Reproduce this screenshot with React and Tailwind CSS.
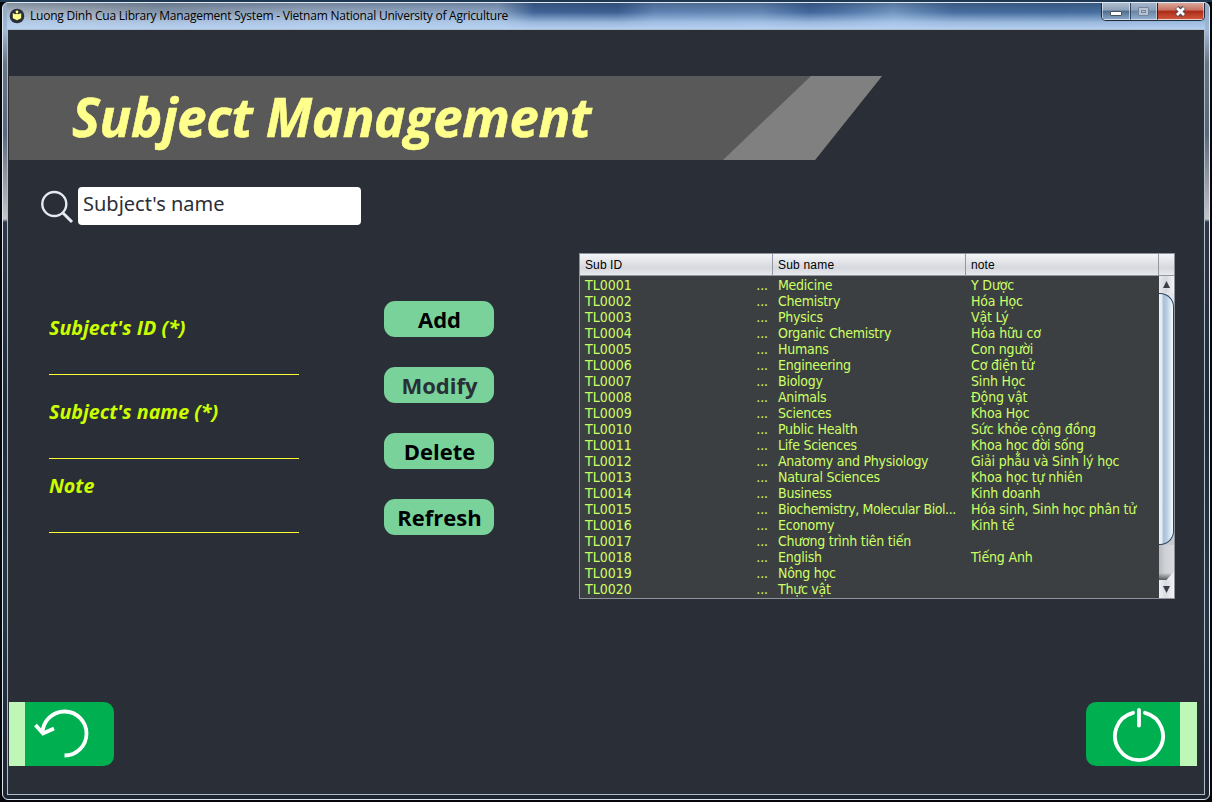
const subjects = [
  ["TL0001", "Medicine", "Y Dược"],
  ["TL0002", "Chemistry", "Hóa Học"],
  ["TL0003", "Physics", "Vật Lý"],
  ["TL0004", "Organic Chemistry", "Hóa hữu cơ"],
  ["TL0005", "Humans", "Con người"],
  ["TL0006", "Engineering", "Cơ điện tử"],
  ["TL0007", "Biology", "Sinh Học"],
  ["TL0008", "Animals", "Động vật"],
  ["TL0009", "Sciences", "Khoa Học"],
  ["TL0010", "Public Health", "Sức khỏe cộng đồng"],
  ["TL0011", "Life Sciences", "Khoa học đời sống"],
  ["TL0012", "Anatomy and Physiology", "Giải phẫu và Sinh lý học"],
  ["TL0013", "Natural Sciences", "Khoa học tự nhiên"],
  ["TL0014", "Business", "Kinh doanh"],
  ["TL0015", "Biochemistry, Molecular Biol...", "Hóa sinh, Sinh học phân tử"],
  ["TL0016", "Economy", "Kinh tế"],
  ["TL0017", "Chương trình tiên tiến", ""],
  ["TL0018", "English", "Tiếng Anh"],
  ["TL0019", "Nông học", ""],
  ["TL0020", "Thực vật", ""],
];

function TitleBar() {
  return (
    <header className="flex h-[26px] shrink-0 items-start justify-between bg-[linear-gradient(90deg,#a9b4c2_0%,#9aa5b3_7%,#8495ab_13%,#93a6be_25%,#8aa3c4_41%,#3f6396_44%,#3b5f92_51%,#5f83b3_54%,#6387b5_63%,#40669a_67%,#4f76a8_70%,#7095c0_74%,#466d9e_79%,#426a9b_88%,#5479a5_100%)]">
      <div className="flex h-[26px] w-full items-start justify-between bg-[linear-gradient(180deg,rgba(20,30,45,.25)_0%,rgba(190,215,245,0)_35%,rgba(185,212,244,.75)_75%,rgba(185,212,244,.95)_100%)]">
        <div className="flex h-[26px] items-center pl-[2px]">
          <svg className="h-4 w-4" viewBox="0 0 16 16">
            <circle cx="8" cy="8" r="7.3" fill="#2b2e37" />
            <path d="M3.8 5.2L7 6.2L8 5.7L9 6.2L12.2 5.2V10.2L8 12.2L3.8 10.2Z" fill="#ffff8c" />
            <circle cx="8" cy="4" r="1.4" fill="#ffff8c" />
          </svg>
          <span className="ml-[5px] whitespace-nowrap font-['Open_Sans',sans-serif] text-[12px] leading-[26px] tracking-[-0.22px] text-black">
            Luong Dinh Cua Library Management System - Vietnam National University of Agriculture
          </span>
        </div>
        <div className="flex h-[18px] w-[104px] overflow-hidden rounded-b-[5px] border border-t-0 border-[#1d2c3f]">
          <div className="flex w-[28px] items-center justify-center border border-t-0 border-white/50 bg-[linear-gradient(180deg,#aebdce_0%,#8da1b8_45%,#4e6a8a_50%,#86a5c5_100%)]">
            <span className="mt-[5px] h-[5px] w-[12px] rounded-[1px] border border-[#4b5360] bg-white" />
          </div>
          <div className="flex w-[27px] items-center justify-center border border-t-0 border-l-[#33465d] border-white/50 bg-[linear-gradient(180deg,#a3b5ca_0%,#8aa0ba_45%,#6883a2_50%,#8fadcd_100%)]">
            <span className="flex h-[9px] w-[11px] items-center justify-center rounded-[1px] border border-[#71849b] bg-[#b5c3d3]">
              <span className="h-[3px] w-[5px] border border-[#71849b]" />
            </span>
          </div>
          <div className="flex flex-1 items-center justify-center border border-t-0 border-l-[#4a1c18] border-white/50 bg-[linear-gradient(180deg,#dba89b_0%,#c9705e_45%,#a82a18_50%,#d0553a_100%)]">
            <svg className="h-[11px] w-[13px]" viewBox="0 0 13 11">
              <path d="M3 1.5L10 9.5M10 1.5L3 9.5" stroke="#4e4a54" strokeWidth="4.8" />
              <path d="M3 2L10 9M10 2L3 9" stroke="#fff" strokeWidth="2.8" />
            </svg>
          </div>
        </div>
      </div>
    </header>
  );
}

function Banner() {
  return (
    <div className="mt-[46px] flex h-[84px]">
      <div className="flex h-[84px] w-[873px] bg-[#595959] [clip-path:polygon(0_0,873px_0,806px_84px,0_84px)]">
        <h1 className="w-[714px] shrink-0 whitespace-nowrap pl-[63px] font-['Open_Sans',sans-serif] text-[54px] font-bold italic leading-[80px] tracking-[-0.4px] text-[#ffff8c] [-webkit-text-stroke:0.6px_#ffff8c]">
          <span className="inline-block origin-left scale-x-[0.976]">Subject Management</span>
        </h1>
        <div className="h-[84px] w-[159px] bg-[#808080] [clip-path:polygon(88px_0,159px_0,159px_84px,0_84px)]" />
      </div>
    </div>
  );
}

function Field({ label, className }) {
  return (
    <div className={"flex w-[250px] flex-col border-b border-[#ffff33] " + className}>
      <label className="whitespace-nowrap font-['Open_Sans',sans-serif] text-[19px] font-bold italic leading-[26px] text-[#ccff00]">
        <span className="inline-block origin-left scale-x-[1.035]">{label}</span>
      </label>
    </div>
  );
}

function ActionButton({ label, dim }) {
  return (
    <button
      className={
        "flex h-9 w-[110px] items-center justify-center rounded-[11px] bg-[#78d299] pl-px font-['Open_Sans',sans-serif] text-[22px] font-bold leading-[34px] " +
        (dim ? "text-[#2a2e37]" : "text-black")
      }
    >
      {label}
    </button>
  );
}

function ScrollBar() {
  return (
    <div className="flex w-[15px] flex-col bg-[linear-gradient(90deg,#b9bac0_0%,#cfd0d5_40%,#dadbe0_100%)]">
      <div className="flex h-[17px] items-center justify-center bg-[linear-gradient(90deg,#e8e9ed_0%,#d5d7dc_45%,#f3f4f6_100%)]">
        <svg className="h-[7px] w-[7px]" viewBox="0 0 7 7"><path d="M3.5 0L7 7H0Z" fill="#3a3e46" /></svg>
      </div>
      <div className="flex h-[252px] bg-[linear-gradient(180deg,#e4e6ea_0%,#e4e6ea_8%,#c9cad0_92%)]">
        <div className="h-[252px] w-[15px] rounded-r-[14px] border border-l-0 border-[#27445f] bg-[linear-gradient(90deg,#f0f5fa_0%,#dfe9f3_22%,#a9c0d6_30%,#b8cde0_55%,#dbeaf6_80%,#f2ffff_100%)]" />
      </div>
      <div className="h-[35px] bg-[linear-gradient(180deg,transparent_80%,#55565a_100%)]">
        <div className="h-full bg-[#eceef1] [clip-path:polygon(100%_76%,100%_100%,50%_100%)]" />
      </div>
      <div className="flex flex-1 items-center justify-center bg-[linear-gradient(90deg,#f0f1f4_0%,#d9dbe0_45%,#f3f4f6_100%)]">
        <svg className="h-[7px] w-[7px]" viewBox="0 0 7 7"><path d="M0 0H7L3.5 7Z" fill="#3a3e46" /></svg>
      </div>
    </div>
  );
}

function SubjectTable() {
  return (
    <section className="flex h-[346px] w-[596px] flex-col border border-[#8d929c] bg-[#3c3f41]">
      <div className="flex h-[22px] shrink-0 border-b border-[#9297a1] bg-[linear-gradient(180deg,#f4f5f8_0%,#dfe1e6_45%,#d6d8de_65%,#e8eaee_100%)] font-['Liberation_Sans',sans-serif] text-[12px] leading-[22px] tracking-[0.1px] text-black">
        <div className="w-[192px] pl-[5px]">Sub ID</div>
        <div className="w-[193px] border-l border-[#9297a1] pl-[5px] tracking-[0.2px]">Sub name</div>
        <div className="w-[193px] border-l border-[#9297a1] pl-[5px]">note</div>
        <div className="flex-1 border-l border-[#9297a1]" />
      </div>
      <div className="flex min-h-0 flex-1">
        <div className="flex w-[579px] flex-col pt-px font-['DejaVu_Sans_Condensed','DejaVu_Sans',sans-serif] text-[14px] leading-[16px] tracking-[-0.25px] text-[#ccff66] [font-stretch:condensed]">
          {subjects.map(([id, name, note]) => (
            <div key={id} className="flex h-4 shrink-0 overflow-hidden whitespace-nowrap">
              <div className="flex w-[193px] justify-between pl-[5px] pr-[5px]">
                <span className="tracking-normal">{id}</span>
                <span className="tracking-[-0.1px]">...</span>
              </div>
              <div className={"w-[193px] pl-[5px] " + (name.length > 25 ? "tracking-[-0.42px]" : "")}>{name}</div>
              <div className="w-[193px] pl-[5px] tracking-[-0.17px]">{note}</div>
            </div>
          ))}
        </div>
        <ScrollBar />
      </div>
    </section>
  );
}

export default function App() {
  return (
    <div className="flex h-[802px] w-[1212px] overflow-hidden bg-[#05070a] p-[2px] shadow-[inset_0_2px_0_#1f3852]">
      <div className="flex flex-1 flex-col rounded-[6px] border border-[#dfe8f2] bg-[linear-gradient(180deg,#8fa6c0_0px,#9fb9d8_28px,#697583_60px,#5a6779_130px,#9b9da5_180px,#c4c5ca_216px,#2e3846_219px,#202b38_400px,#253747_600px,#1d2530_800px)] px-[4px]">
        <TitleBar />
        <main className="mb-[4px] flex flex-1 flex-col border border-[#aebccb] bg-[#2a2e37] pl-px">
          <Banner />
          <div className="mt-[27px] flex items-start pl-[31px]">
            <svg className="mt-[3px] h-[34px] w-[34px]" viewBox="0 0 34 34" fill="none" stroke="#e6eaf2" strokeWidth="2.4">
              <circle cx="14.3" cy="14" r="12" />
              <path d="M22.5 22.5L32 32" strokeWidth="3" />
            </svg>
            <div className="ml-[4px] h-[38px] w-[283px] rounded-[4px] bg-white pl-[5px] font-['Noto_Sans',sans-serif] text-[20px] leading-[34px] text-[#2b2e37]">
              Subject&apos;s name
            </div>
          </div>
          <div className="mt-[28px] flex items-start pl-[40px]">
            <div className="flex w-[250px] flex-col pt-[62px]">
              <Field label="Subject's ID (*)" className="h-[60px]" />
              <Field label="Subject's name (*)" className="mt-[24px] h-[60px]" />
              <Field label="Note" className="mt-[14px] h-[60px]" />
            </div>
            <div className="ml-[85px] flex flex-col gap-[30px] pt-[48px]">
              <ActionButton label="Add" />
              <ActionButton label="Modify" dim />
              <ActionButton label="Delete" />
              <ActionButton label="Refresh" />
            </div>
            <div className="ml-[85px]">
              <SubjectTable />
            </div>
          </div>
          <div className="mt-[103px] flex justify-between pr-[7px]">
            <button className="flex h-16 w-[105px] overflow-hidden rounded-r-[10px] border-l-[16px] border-[#bff7b8] bg-[#00b050]">
              <svg className="ml-[8px] mt-[5px] h-[54px] w-[58px]" viewBox="0 0 58 54" fill="none" stroke="#fff" strokeWidth="3.8">
                <path d="M9.5 26A22 22 0 1 1 31.5 48.5" />
                <path d="M2.5 18L10 26.5L21 21.5" />
              </svg>
            </button>
            <button className="flex h-16 w-[111px] overflow-hidden rounded-l-[10px] border-r-[17px] border-[#bff7b8] bg-[#00b050]">
              <svg className="ml-[26px] mt-[3px] h-[58px] w-[54px] shrink-0" viewBox="0 0 54 58" fill="none" stroke="#fff" strokeWidth="3.8" strokeLinecap="round">
                <path d="M21 7.8A24 24 0 1 0 33 7.8" />
                <path d="M27 5V20.5" />
              </svg>
            </button>
          </div>
        </main>
      </div>
    </div>
  );
}
